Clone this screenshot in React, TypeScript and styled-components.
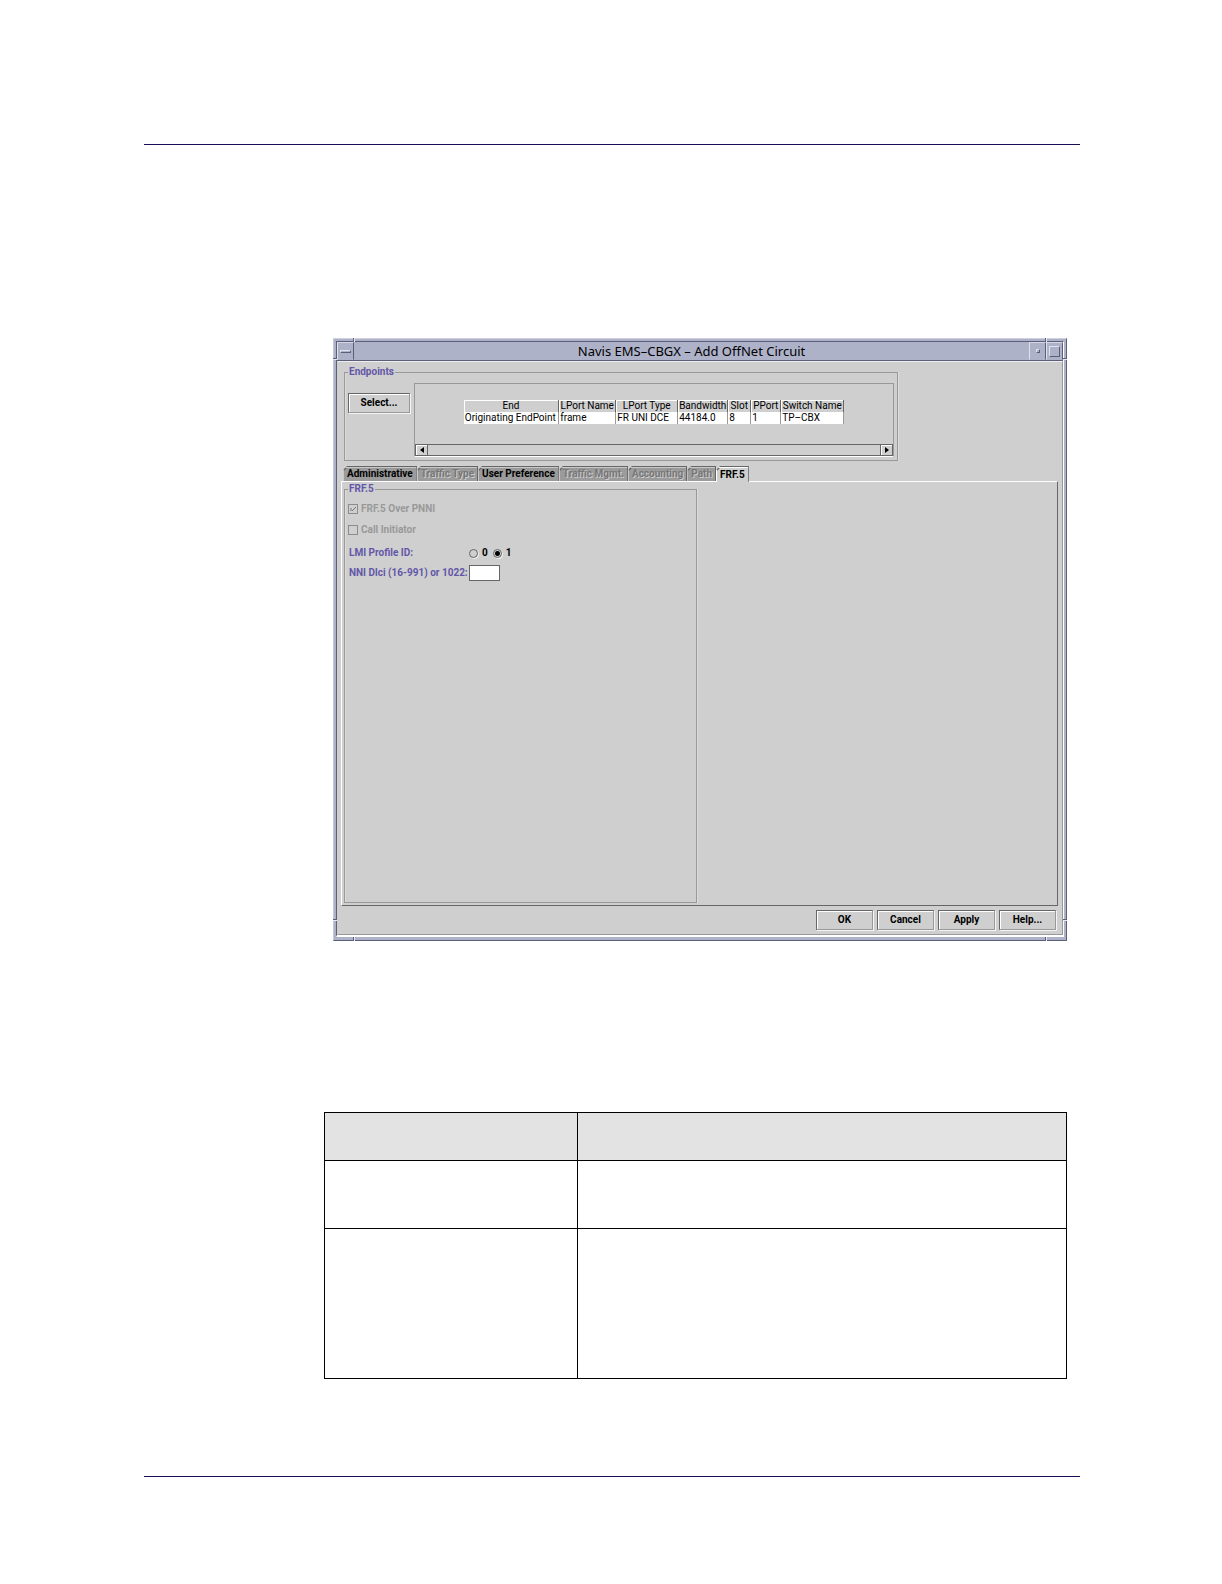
import React from "react";
import styled, { createGlobalStyle, css } from "styled-components";

const face = "#cfcfcf";
const titleBlue = "#aeb2c9";
const frameDark = "#5d5f78";
const shade = "#666666";
const groove = "#999999";
const labelBlue = "#6257a8";
const uiFont = `Roboto, "Liberation Sans", Arial, sans-serif`;

const Global = createGlobalStyle`
  * { box-sizing: border-box; }
  body { margin: 0; background: #fff; }
`;

const Page = styled.div`
  padding: 144px 142px 107px 144px;
  font: 10px/12px ${uiFont};
  color: #000;
`;

const Rule = styled.hr`
  margin: 0;
  border: 0;
  height: 1px;
  background: #1b0a55;
`;

const Body = styled.main`
  padding: 193px 13px 97px 180px;
`;

const Window = styled.section`
  position: relative;
  margin-left: 9px;
  background: ${titleBlue};
  border: 1px solid;
  border-color: #d0d0e0 ${frameDark} ${frameDark} #c6c7da;
  padding: 2px 2px 3px;
`;

const Notch = styled.i<{ $v: "top" | "bottom"; $h: "left" | "right"; $upright?: boolean }>`
  position: absolute;
  ${(p) => p.$v}: ${(p) => (p.$upright ? -1 : 19)}px;
  ${(p) => p.$h}: ${(p) => (p.$upright ? 19 : -1)}px;
  width: ${(p) => (p.$upright ? 2 : 4)}px;
  height: ${(p) => (p.$upright ? 4 : 2)}px;
  background: linear-gradient(${(p) => (p.$upright ? "to right" : "to bottom")}, ${frameDark} 1px, #e8e8f2 1px);
`;

const Frame = styled.div`
  border: 1px solid;
  border-width: 1px 1px 2px;
  border-color: ${frameDark} #fff #fff ${frameDark};
`;

const TitleBar = styled.header`
  display: flex;
  height: 19px;
  background: ${titleBlue};
  border-bottom: 1px solid ${frameDark};
`;

const Title = styled.h1`
  flex: 1;
  margin: 0;
  text-align: center;
  font: 13px/18px "Noto Sans", "Open Sans", sans-serif;
`;

const TitleButton = styled.button`
  display: flex;
  align-items: center;
  justify-content: center;
  width: 17px;
  padding: 0;
  background: transparent;
  border: 1px solid;
  border-color: #d6d7e6 ${frameDark} ${titleBlue} #e2e2ee;
`;

const Glyph = styled.span<{ $w: number; $h: number }>`
  width: ${(p) => p.$w}px;
  height: ${(p) => p.$h}px;
  border: 1px solid;
  border-color: #e2e2ee ${frameDark} ${frameDark} #e2e2ee;
`;

const Content = styled.div`
  background: ${face};
  border: 1px solid ${groove};
  border-top-color: #eee;
  border-left-color: ${face};
  padding: 4px 4px 4px 3px;
`;

const Group = styled.fieldset`
  min-width: 0;
  margin: 0;
  border: 1px solid ${groove};
  box-shadow: inset 1px 0 0 #dcdcdc, 1px 0 0 #dcdcdc;
  padding: 0 3px 3px;
`;

const Legend = styled.legend`
  padding: 0 1px;
  color: ${labelBlue};
  font-weight: bold;
`;

const Endpoints = styled(Group)`
  width: 554px;
  margin: 0 0 5px 3px;
`;

const EndpointRow = styled.div`
  display: flex;
  align-items: flex-start;
  gap: 4px;
  padding-top: 5px;
`;

const Button = styled.button`
  height: 20px;
  padding: 0;
  background: ${face};
  border: 1px solid ${shade};
  border-right-color: ${groove};
  border-bottom-color: ${groove};
  box-shadow: inset 1px 1px 0 #fff, 1px 1px 0 #f4f4f4;
  color: #000;
  font: bold 10px/12px ${uiFont};
`;

const SelectButton = styled(Button)`
  width: 62px;
  margin-top: 10px;
`;

const ScrollPane = styled.div`
  flex: 1;
  border: 1px solid ${groove};
  border-bottom-color: #fff;
`;

const Viewport = styled.div`
  display: flex;
  justify-content: center;
  height: 60px;
  padding-top: 16px;
`;

const Grid = styled.table`
  width: 380px;
  height: 24px;
  table-layout: fixed;
  border-collapse: collapse;
  white-space: nowrap;
`;

const HeadCell = styled.th<{ $w: number }>`
  width: ${(p) => p.$w}px;
  height: 12px;
  padding: 0;
  background: ${face};
  border: 0 solid ${shade};
  border-right-width: 1px;
  box-shadow: inset 1px 1px 0 #fff;
  font-weight: normal;
  line-height: 12px;
  text-align: center;
`;

const Cell = styled.td`
  height: 12px;
  padding: 0 0 0 1px;
  background: #fff;
  border-right: 1px solid ${groove};
  line-height: 12px;
`;

const ScrollBar = styled.div`
  display: flex;
  justify-content: space-between;
  height: 12px;
  border: 1px solid ${shade};
`;

const ScrollButton = styled.button<{ $end?: boolean }>`
  display: flex;
  align-items: center;
  justify-content: center;
  width: 12px;
  padding: 0;
  background: ${face};
  border: 0 solid ${shade};
  border-width: ${(p) => (p.$end ? "0 0 0 1px" : "0 1px 0 0")};
  box-shadow: inset 1px 1px 0 #fff;
`;

const Tabs = styled.div`
  display: flex;
  height: 15px;
  padding-left: 2px;
`;

const Tab = styled.button<{ $selected?: boolean }>`
  padding: 0 3px 0 4px;
  background: linear-gradient(135deg, ${shade} 3px, ${(p) => (p.$selected ? face : "#9b9b9b")} 4px);
  border: solid ${shade};
  border-width: 1px 1px 0 0;
  box-shadow: inset 1px 1px 0 #c8c8c8;
  clip-path: polygon(4px 0, 100% 0, 100% 100%, 0 100%, 0 4px);
  color: #000;
  font: bold 10px/14px ${uiFont};
  &:disabled {
    color: #777;
    text-shadow: 1px 1px 0 #ccc;
  }
  ${(p) =>
    p.$selected &&
    css`
      position: relative;
      height: 16px;
      box-shadow: inset 1px 1px 0 #fff;
    `}
`;

const Panel = styled.div`
  display: flex;
  min-height: 425px;
  padding: 1px 2px 2px;
  border: 1px solid;
  border-color: #fff ${shade} ${shade} #fff;
`;

const FormGroup = styled(Group)`
  width: 353px;
  padding: 0 3px;
`;

const Form = styled.div`
  display: grid;
  gap: 9px;
  padding-top: 8px;
`;

const CheckLabel = styled.label`
  display: flex;
  align-items: center;
  gap: 3px;
  height: 12px;
  color: ${groove};
  font-weight: bold;
`;

const Check = styled.input`
  appearance: none;
  width: 10px;
  height: 10px;
  margin: 0;
  border: 1px solid #8c8c8c;
`;

const CheckBox = styled.span`
  display: grid;
  > * { grid-area: 1 / 1; }
  svg { pointer-events: none; }
`;

const Fields = styled.div`
  display: grid;
  grid-template-columns: 121px auto;
  justify-content: start;
  align-items: center;
  row-gap: 6px;
  padding-top: 2px;
  color: ${labelBlue};
  font-weight: bold;
  white-space: nowrap;
`;

const FieldLabel = styled.label`
  padding-left: 1px;
`;

const Radios = styled.div`
  display: flex;
  gap: 5px;
`;

const RadioLabel = styled.label`
  display: flex;
  align-items: center;
  gap: 4px;
  color: #000;
`;

const Radio = styled.input`
  appearance: none;
  width: 9px;
  height: 9px;
  margin: 0;
  border: 1px solid ${shade};
  border-radius: 50%;
  box-shadow: 1px 1px 0 #eee;
  &:checked {
    background: radial-gradient(circle, #000 2px, ${face} 3px);
  }
`;

const TextBox = styled.input`
  width: 31px;
  height: 16px;
  padding: 0 2px;
  background: #fff;
  border: 1px solid ${shade};
  font: 10px ${uiFont};
`;

const Actions = styled.footer`
  display: flex;
  justify-content: flex-end;
  gap: 4px;
  padding: 4px 2px 0 0;
`;

const ActionButton = styled(Button)`
  width: 57px;
`;

const FieldTable = styled.table`
  width: 100%;
  margin-top: 171px;
  table-layout: fixed;
  border-collapse: collapse;
`;

const FieldHead = styled.th<{ $w?: string }>`
  width: ${(p) => p.$w ?? "auto"};
  height: 48px;
  background: #e3e3e4;
  border: 1px solid #000;
`;

const FieldCell = styled.td<{ $h: number }>`
  height: ${(p) => p.$h}px;
  border: 1px solid #000;
`;

const columns: [string, number, string][] = [
  ["End", 95, "Originating EndPoint"],
  ["LPort Name", 57, "frame"],
  ["LPort Type", 62, "FR UNI DCE"],
  ["Bandwidth", 50, "44184.0"],
  ["Slot", 23, "8"],
  ["PPort", 30, "1"],
  ["Switch Name", 63, "TP–CBX"],
];

const tabs = [
  { name: "Administrative" },
  { name: "Traffic Type", disabled: true },
  { name: "User Preference" },
  { name: "Traffic Mgmt.", disabled: true },
  { name: "Accounting", disabled: true },
  { name: "Path", disabled: true },
  { name: "FRF.5", selected: true },
];

const corners = [
  ["top", "left"],
  ["top", "right"],
  ["bottom", "left"],
  ["bottom", "right"],
] as const;

export default function App() {
  return (
    <Page>
      <Global />
      <Rule />
      <Body>
        <Window>
          <Frame>
            <TitleBar>
              <TitleButton aria-label="Window menu"><Glyph $w={11} $h={3} /></TitleButton>
              <Title>Navis EMS–CBGX – Add OffNet Circuit</Title>
              <TitleButton aria-label="Minimize"><Glyph $w={4} $h={4} /></TitleButton>
              <TitleButton aria-label="Maximize"><Glyph $w={11} $h={11} /></TitleButton>
            </TitleBar>
            <Content>
              <Endpoints>
                <Legend>Endpoints</Legend>
                <EndpointRow>
                  <SelectButton>Select...</SelectButton>
                  <ScrollPane>
                    <Viewport>
                      <Grid>
                        <thead>
                          <tr>{columns.map(([name, w]) => <HeadCell key={name} $w={w}>{name}</HeadCell>)}</tr>
                        </thead>
                        <tbody>
                          <tr>{columns.map(([name, , value]) => <Cell key={name}>{value}</Cell>)}</tr>
                        </tbody>
                      </Grid>
                    </Viewport>
                    <ScrollBar>
                      <ScrollButton aria-label="Scroll left">
                        <svg width="4" height="6"><path d="M4 0v6L0 3z" /></svg>
                      </ScrollButton>
                      <ScrollButton $end aria-label="Scroll right">
                        <svg width="4" height="6"><path d="M0 0v6l4-3z" /></svg>
                      </ScrollButton>
                    </ScrollBar>
                  </ScrollPane>
                </EndpointRow>
              </Endpoints>
              <Tabs role="tablist">
                {tabs.map((t) => (
                  <Tab key={t.name} role="tab" aria-selected={!!t.selected} disabled={t.disabled} $selected={t.selected}>
                    {t.name}
                  </Tab>
                ))}
              </Tabs>
              <Panel role="tabpanel">
                <FormGroup>
                  <Legend>FRF.5</Legend>
                  <Form>
                    <CheckLabel>
                      <CheckBox>
                        <Check type="checkbox" defaultChecked disabled />
                        <svg width="10" height="10" fill="none" stroke="#777"><path d="M3 4v3M4 7l4-4" /></svg>
                      </CheckBox>
                      FRF.5 Over PNNI
                    </CheckLabel>
                    <CheckLabel>
                      <Check type="checkbox" disabled />
                      Call Initiator
                    </CheckLabel>
                    <Fields>
                      <FieldLabel as="span" id="lmi">LMI Profile ID:</FieldLabel>
                      <Radios role="radiogroup" aria-labelledby="lmi">
                        <RadioLabel><Radio type="radio" name="lmi" />0</RadioLabel>
                        <RadioLabel><Radio type="radio" name="lmi" defaultChecked />1</RadioLabel>
                      </Radios>
                      <FieldLabel htmlFor="dlci">NNI Dlci (16-991) or 1022:</FieldLabel>
                      <TextBox id="dlci" />
                    </Fields>
                  </Form>
                </FormGroup>
              </Panel>
              <Actions>
                <ActionButton>OK</ActionButton>
                <ActionButton>Cancel</ActionButton>
                <ActionButton>Apply</ActionButton>
                <ActionButton>Help...</ActionButton>
              </Actions>
            </Content>
          </Frame>
          {corners.map(([v, h]) => (
            <React.Fragment key={v + h}>
              <Notch $v={v} $h={h} />
              <Notch $v={v} $h={h} $upright />
            </React.Fragment>
          ))}
        </Window>
        <FieldTable>
          <thead>
            <tr><FieldHead $w="253px" /><FieldHead /></tr>
          </thead>
          <tbody>
            <tr><FieldCell $h={68} /><FieldCell $h={68} /></tr>
            <tr><FieldCell $h={150} /><FieldCell $h={150} /></tr>
          </tbody>
        </FieldTable>
      </Body>
      <Rule />
    </Page>
  );
}
